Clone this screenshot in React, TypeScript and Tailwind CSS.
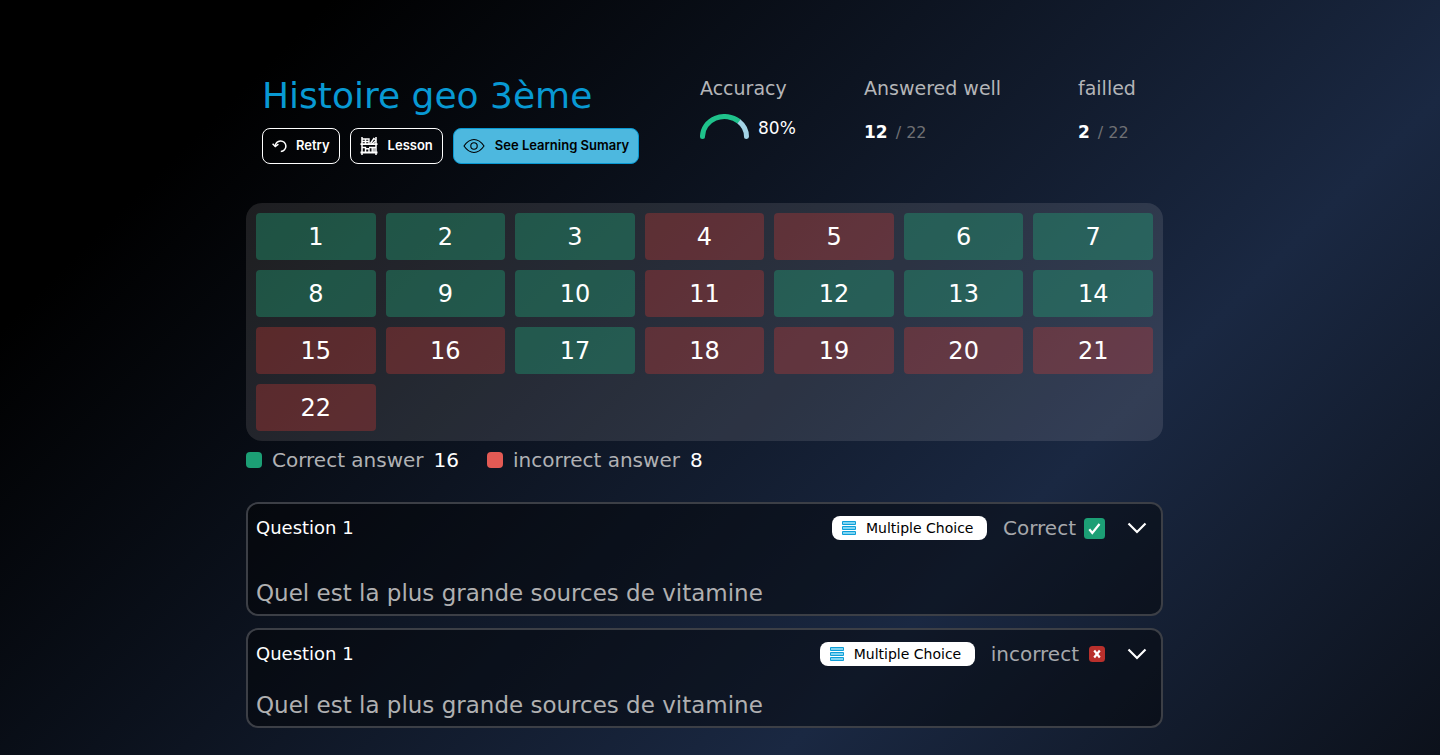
import type { ReactNode } from "react";

const wrongAnswers = [4, 5, 11, 15, 16, 18, 19, 20, 21, 22];
const tiles = Array.from({ length: 22 }, (_, i) => i + 1);

function RetryIcon() {
  return (
    <svg className="h-4 w-4 shrink-0" viewBox="0 0 16 16" fill="none" stroke="currentColor" strokeWidth="1.5" aria-hidden="true">
      <path d="M3.300 8.400A5.300 5.300 0 1 1 8.800 13.500" />
      <path d="M0.600 5.800 3.300 8.600 6.400 6.200" />
    </svg>
  );
}

function ShelfIcon() {
  return (
    <svg className="h-[18px] w-[18px] shrink-0" viewBox="0 0 18 18" fill="none" stroke="currentColor" strokeWidth="1.4" aria-hidden="true">
      <path d="M2 0v18M16 0v18" strokeWidth="1.5" />
      <path d="M.5 7.200h17M.5 15.500h17" strokeWidth="1.800" />
      <path d="M2 2h3.500v5M5.500 2H9v5M2 4.500h7M10.500 6.500 13.800 1.500 16 3M12 7l4-3.500" />
      <path d="M2 10.500h3.500v5M5.500 11.800H9v4M9 10.500h3.200v5M12.200 10.500H16M14 10.500v5" />
    </svg>
  );
}

function EyeIcon() {
  return (
    <svg className="h-4 w-[22px] shrink-0" viewBox="0 0 22 16" fill="none" stroke="currentColor" strokeWidth="1.1" aria-hidden="true">
      <path d="M1 8C4 3.600 7.300 1.500 11 1.500S18 3.600 21 8C18 12.400 14.700 14.500 11 14.500S4 12.400 1 8Z" />
      <circle cx="11" cy="8" r="3.200" />
    </svg>
  );
}

function ListIcon() {
  return (
    <svg className="h-[14px] w-[14px] shrink-0" viewBox="0 0 14 14" fill="#7fd4f2" stroke="#0e9fd8" aria-hidden="true">
      <path d="M.5.5h13v3H.5zM.5 5.500h13v3H.5zM.5 10.500h13v3H.5z" />
    </svg>
  );
}

function Chevron() {
  return (
    <svg className="h-3 w-5" viewBox="0 0 20 12" fill="none" stroke="white" strokeWidth="2.200" aria-hidden="true">
      <path d="M1.500 1.500 10 10l8.500-8.500" />
    </svg>
  );
}

function Gauge() {
  return (
    <svg className="h-[30px] w-[49px] shrink-0" viewBox="0 0 49 30" fill="none" strokeWidth="5" strokeLinecap="round" role="img" aria-label="80 percent">
      <path d="M39 7.460A22 20 0 0 1 46.500 22.500" stroke="#a3d3e6" />
      <path d="M2.500 22.500A22 20 0 0 1 39 7.460" stroke="#1fc28b" strokeLinecap="butt" />
      <path d="M2.500 22.500V22.400" stroke="#1fc28b" />
    </svg>
  );
}

function Stat({ label, children }: { label: string; children: ReactNode }) {
  return (
    <div>
      <dt className="text-[19px] leading-5 text-[#b4b5b8]">{label}</dt>
      <dd className="mt-4 flex h-[38px] items-center text-white">{children}</dd>
    </div>
  );
}

function Score({ value, total }: { value: number; total: number }) {
  return (
    <>
      <span className="text-[17px] font-bold">{value}</span>
      <span className="ml-2 text-base text-[#6f7074]">/ {total}</span>
    </>
  );
}

function Legend({ color, label, count }: { color: string; label: string; count: number }) {
  return (
    <li className="flex items-center gap-[10px]">
      <span className={`h-4 w-4 rounded ${color}`} />
      <span className="text-[#b0b1b4]">{label}</span>
      <span className="text-white">{count}</span>
    </li>
  );
}

function Question({ correct }: { correct: boolean }) {
  return (
    <article className="rounded-xl border-2 border-[#3c3f46] bg-black/40 px-2 pt-3 pb-2">
      <header className="flex h-6 items-center">
        <h2 className="text-lg text-white">Question 1</h2>
        <span className="ml-auto flex h-6 w-[155px] items-center gap-[10px] rounded-lg bg-white px-[10px] text-sm whitespace-nowrap text-black">
          <ListIcon />
          Multiple Choice
        </span>
        <span className="ml-4 text-xl text-[#a6a8ac]">{correct ? "Correct" : "incorrect"}</span>
        {correct ? (
          <svg className="ml-2 h-[21px] w-[21px]" viewBox="0 0 21 21" aria-hidden="true">
            <rect width="21" height="21" rx="3.500" fill="#1c9f75" />
            <path d="M5.300 11.300 8.300 15 15.500 6" fill="none" stroke="white" strokeWidth="2.200" />
          </svg>
        ) : (
          <svg className="ml-[10px] h-4 w-4" viewBox="0 0 16 16" aria-hidden="true">
            <rect width="16" height="16" rx="3.500" fill="#b9302c" />
            <path d="m5.200 4.500 5.600 7M10.800 4.500l-5.600 7" stroke="white" strokeWidth="2.200" />
          </svg>
        )}
        <button type="button" aria-label="Toggle question" className="mr-[6px] ml-[22px]">
          <Chevron />
        </button>
      </header>
      <p className={`${correct ? "mt-10" : "mt-[26px]"} text-[23px] leading-[26px] text-[#b0b0b1]`}>
        Quel est la plus grande sources de vitamine
      </p>
    </article>
  );
}

const actionClass = "flex h-9 items-center rounded-lg border px-[9px] text-[13px] font-semibold whitespace-nowrap";

export default function App() {
  return (
    <div className="min-h-screen bg-[linear-gradient(135deg,#000_0%,#000_15%,#1a2842_70%,#0c111b_100%)] pt-[78px] pr-[31px] pb-[27px] font-['DejaVu_Sans',sans-serif]">
      <main className="mx-auto max-w-[917px]">
        <header className="flex justify-between pl-4">
          <div>
            <h1 className="text-4xl leading-9 text-[#0899d3]">Histoire geo 3ème</h1>
            <div className="mt-[14px] flex gap-[10px] font-['Inter',sans-serif]">
              <button type="button" className={`${actionClass} gap-2 border-white text-white`}>
                <RetryIcon />
                Retry
              </button>
              <button type="button" className={`${actionClass} gap-[10px] border-white text-white`}>
                <ShelfIcon />
                Lesson
              </button>
              <button type="button" className={`${actionClass} gap-[10px] border-[#0899d3] bg-[#4db8df] text-black`}>
                <EyeIcon />
                See Learning Sumary
              </button>
            </div>
          </div>
          <dl className="grid grid-cols-[164px_214px_85px]">
            <Stat label="Accuracy">
              <div className="flex items-center gap-[9px] pb-2">
                <Gauge />
                <span className="text-[17px]">80%</span>
              </div>
            </Stat>
            <Stat label="Answered well">
              <Score value={12} total={22} />
            </Stat>
            <Stat label="failled">
              <Score value={2} total={22} />
            </Stat>
          </dl>
        </header>

        <section aria-label="Answers" className="mt-[39px] grid grid-cols-7 gap-[10px] rounded-2xl bg-[#fffaf5]/11 p-[10px]">
          {tiles.map((n) => (
            <button
              key={n}
              type="button"
              className={`h-[47px] rounded text-2xl text-white ${wrongAnswers.includes(n) ? "bg-[#dd3a36]/30" : "bg-[#20a075]/40"}`}
            >
              {n}
            </button>
          ))}
        </section>

        <ul className="mt-2 flex gap-7 text-xl leading-[22px]">
          <Legend color="bg-[#1c9f75]" label="Correct answer" count={16} />
          <Legend color="bg-[#e35a54]" label="incorrect answer" count={8} />
        </ul>

        <section aria-label="Questions" className="mt-[31px] flex flex-col gap-3">
          <Question correct />
          <Question correct={false} />
        </section>
      </main>
    </div>
  );
}
